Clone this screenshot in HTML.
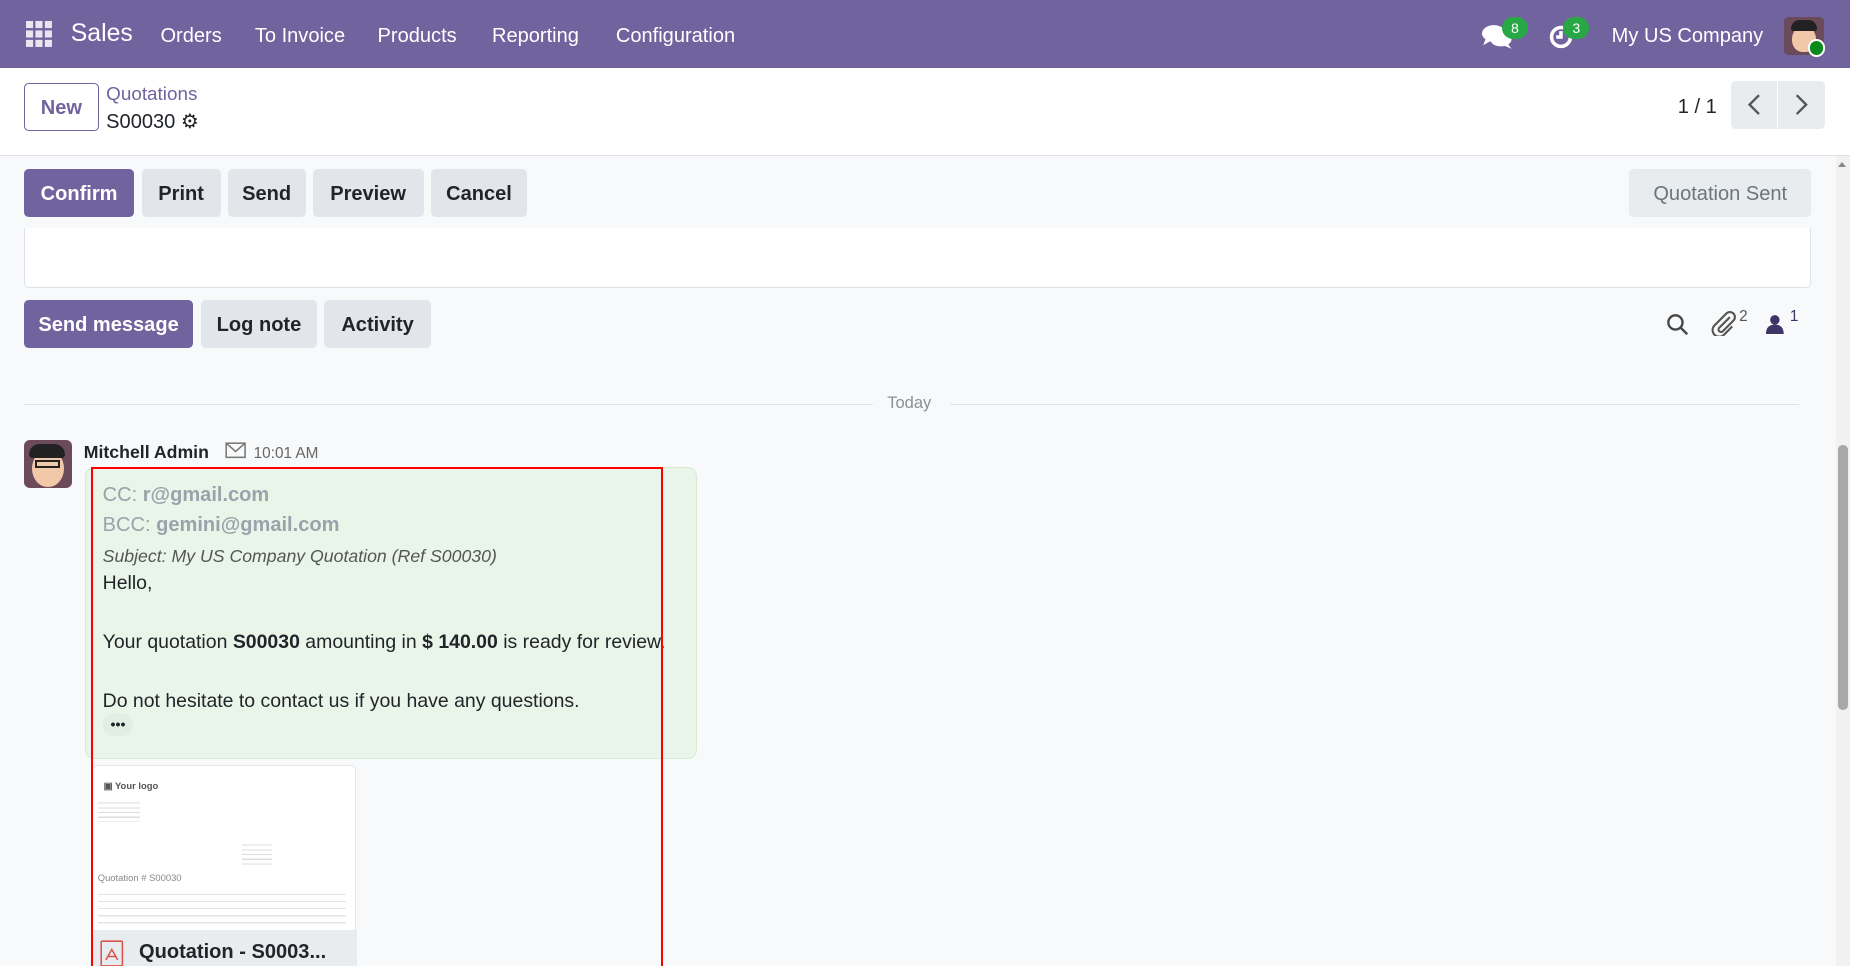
<!DOCTYPE html>
<html><head><meta charset="utf-8"><style>
*{box-sizing:border-box;margin:0;padding:0}
html,body{width:1850px;height:966px;overflow:hidden;background:#f8f9fa}
#w{width:1568px;height:819px;zoom:1.17985;position:relative;font-family:"Liberation Sans",sans-serif;color:#212529;overflow:hidden;background:#f8f9fa}
.a{position:absolute;white-space:nowrap}
.nav{left:0;top:0;width:1568px;height:58px;background:#71639e}
.nav .t{color:#fff;font-size:17px;top:21px}
.btn{position:absolute;height:41px;border-radius:4px;background:#e2e5e9;color:#212529;font-weight:bold;font-size:17px;display:flex;align-items:center;justify-content:center;padding-top:2px}
.pri{background:#71639e;color:#fff}
.badge{position:absolute;width:22px;height:19px;border-radius:10px;background:#28a745;color:#fff;font-size:12px;text-align:center;line-height:19px}
.m{font-size:16.5px}
</style></head><body><div id="w">
<div class="a nav">
 <svg class="a" style="left:22px;top:18px" width="23" height="23" viewBox="0 0 23 23" fill="#e9e6f2"><rect x="0" y="0" width="6" height="6"/><rect x="8" y="0" width="6" height="6"/><rect x="16" y="0" width="6" height="6"/><rect x="0" y="8" width="6" height="6"/><rect x="8" y="8" width="6" height="6"/><rect x="16" y="8" width="6" height="6"/><rect x="0" y="16" width="6" height="6"/><rect x="8" y="16" width="6" height="6"/><rect x="16" y="16" width="6" height="6"/></svg>
 <div class="a t" style="left:60px;top:17px;font-size:21px">Sales</div>
 <div class="a t" style="left:136px">Orders</div>
 <div class="a t" style="left:216px">To Invoice</div>
 <div class="a t" style="left:320px">Products</div>
 <div class="a t" style="left:417px">Reporting</div>
 <div class="a t" style="left:522px">Configuration</div>
 <svg class="a" style="left:1256px;top:20px" width="26" height="22" viewBox="0 0 26 22" fill="#fff"><ellipse cx="10" cy="8" rx="10" ry="7"/><path d="M3 13 L1 18 L8 14Z"/><ellipse cx="16" cy="13" rx="9" ry="6"/><path d="M22 17 L25 21 L18 18Z"/></svg>
 <div class="badge" style="left:1273px;top:14px">8</div>
 <svg class="a" style="left:1312px;top:20px" width="22" height="22" viewBox="0 0 22 22" fill="none" stroke="#fff" stroke-width="3"><circle cx="11" cy="11" r="8"/><path d="M11 6v5h-4"/></svg>
 <div class="badge" style="left:1325px;top:14px">3</div>
 <div class="a t" style="left:1366px">My US Company</div>
 <div class="a" style="left:1512px;top:14px;width:34px;height:33px;border-radius:4px;background:#6b4a5a"><div style="position:absolute;left:7px;top:8px;width:20px;height:22px;border-radius:50% 50% 45% 45%;background:#f2c9a8"></div><div style="position:absolute;left:6px;top:3px;width:22px;height:9px;border-radius:8px 8px 2px 2px;background:#222"></div></div>
 <div class="a" style="left:1532px;top:33px;width:15px;height:15px;border-radius:50%;background:#0a8a1a;border:2px solid #fff"></div>
</div>
<div class="a" style="left:0;top:58px;width:1568px;height:74px;background:#fff;border-bottom:1px solid #dee2e6"></div>
<div class="a" style="left:20px;top:70px;width:64px;height:41px;border:1px solid #71639e;border-radius:4px;color:#71639e;font-size:17px;font-weight:bold;text-align:center;line-height:41px">New</div>
<div class="a" style="left:90px;top:70px;color:#71639e;font-size:16px">Quotations</div>
<div class="a" style="left:90px;top:92px;font-size:17px">S00030 <span style="font-size:17px">⚙</span></div>
<div class="a" style="left:1422px;top:81px;font-size:17px">1 / 1</div>
<div class="a" style="left:1467px;top:69px;width:80px;height:40px;background:#e9ecef;border-radius:4px"></div>
<div class="a" style="left:1506px;top:69px;width:1px;height:40px;background:#fff"></div>
<svg class="a" style="left:1480px;top:80px" width="56" height="18" viewBox="0 0 56 18" fill="none" stroke="#555" stroke-width="2"><path d="M11 1 L3 9 L11 17"/><path d="M43 1 L51 9 L43 17"/></svg>
<div class="btn pri" style="left:20px;top:143px;width:94px">Confirm</div>
<div class="btn" style="left:120px;top:143px;width:67px">Print</div>
<div class="btn" style="left:193px;top:143px;width:66px">Send</div>
<div class="btn" style="left:265px;top:143px;width:94px">Preview</div>
<div class="btn" style="left:365px;top:143px;width:82px">Cancel</div>
<div class="btn" style="left:1381px;top:143px;width:154px;background:#e9ecef;color:#6c757d;font-weight:normal">Quotation Sent</div>
<div class="a" style="left:20px;top:193px;width:1515px;height:51px;background:#fff;border:1px solid #dee2e6;border-top:none;border-radius:0 0 4px 4px"></div>
<div class="btn pri" style="left:20px;top:254px;width:144px">Send message</div>
<div class="btn" style="left:170px;top:254px;width:99px">Log note</div>
<div class="btn" style="left:275px;top:254px;width:90px">Activity</div>
<svg class="a" style="left:1412px;top:265px" width="20" height="20" viewBox="0 0 20 20" fill="none" stroke="#444" stroke-width="2"><circle cx="8" cy="8" r="6"/><path d="M12.5 12.5 L18 18"/></svg>
<svg class="a" style="left:1450px;top:263px" width="22" height="22" viewBox="0 0 22 22" fill="none" stroke="#555" stroke-width="1.8"><path d="M16 6 L7 15 a2 2 0 0 0 3 3 L19 9 a4 4 0 0 0 -6 -6 L3 13 a5.5 5.5 0 0 0 8 8 L18 14"/></svg>
<div class="a" style="left:1474px;top:261px;font-size:13px;color:#555">2</div>
<svg class="a" style="left:1497px;top:266px" width="15" height="17" viewBox="0 0 15 17" fill="#3e3465"><circle cx="7.5" cy="5" r="4"/><path d="M0 17 Q0 9 7.5 9 Q15 9 15 17Z"/></svg>
<div class="a" style="left:1517px;top:261px;font-size:13px;color:#3e3465">1</div>
<div class="a" style="left:20px;top:342px;width:720px;height:1px;background:#dee2e6"></div>
<div class="a" style="left:805px;top:342px;width:720px;height:1px;background:#dee2e6"></div>
<div class="a" style="left:752px;top:334px;font-size:14px;color:#8a8f95">Today</div>
<div class="a" style="left:20px;top:373px;width:41px;height:41px;border-radius:5px;background:#6b4a5a;overflow:hidden"><div style="position:absolute;left:7px;top:8px;width:27px;height:32px;border-radius:50%;background:#f2c9a8"></div><div style="position:absolute;left:5px;top:3px;width:30px;height:12px;border-radius:10px 10px 3px 3px;background:#222"></div><div style="position:absolute;left:10px;top:17px;width:21px;height:7px;border:2px solid #222"></div></div>
<div class="a" style="left:71px;top:375px;font-size:15px;font-weight:bold">Mitchell Admin</div>
<svg class="a" style="left:191px;top:375px" width="18" height="14" viewBox="0 0 18 14" fill="none" stroke="#777" stroke-width="1.3"><rect x="1" y="1" width="16" height="12"/><path d="M1 1 L9 8 L17 1"/></svg>
<div class="a" style="left:215px;top:377px;font-size:13px;color:#666">10:01 AM</div>
<div class="a" style="left:72px;top:396px;width:519px;height:247px;background:#eaf5ea;border:1px solid #d6ead6;border-radius:8px"></div>
<div class="a" style="left:87px;top:410px;font-size:17px;color:#9aa3ab">CC: <b>r@gmail.com</b></div>
<div class="a" style="left:87px;top:436px;font-size:17px;color:#9aa3ab">BCC: <b>gemini@gmail.com</b></div>
<div class="a" style="left:87px;top:463px;font-size:15px;color:#555;font-style:italic">Subject: My US Company Quotation (Ref S00030)</div>
<div class="a m" style="left:87px;top:485px">Hello,</div>
<div class="a m" style="left:87px;top:535px">Your quotation <b>S00030</b> amounting in <b>$ 140.00</b> is ready for review.</div>
<div class="a m" style="left:87px;top:585px">Do not hesitate to contact us if you have any questions.</div>
<div class="a" style="left:87px;top:604px;width:26px;height:20px;border-radius:10px;background:#e3eee3;font-size:12px;text-align:center;line-height:20px;font-weight:bold">•••</div>
<div class="a" style="left:78px;top:648px;width:224px;height:171px;background:#fff;border:1px solid #e5e5e5;border-radius:4px 4px 0 0">
 <div class="a" style="left:9px;top:12px;font-size:8px;font-weight:bold;color:#555">▣ Your logo</div>
 <div class="a" style="left:4px;top:28px;width:36px;height:20px;background:repeating-linear-gradient(#fff 0 3px,#ddd 3px 4px)"></div>
 <div class="a" style="left:126px;top:64px;width:26px;height:20px;background:repeating-linear-gradient(#fff 0 3px,#ddd 3px 4px)"></div>
 <div class="a" style="left:4px;top:90px;font-size:8px;color:#888">Quotation # S00030</div>
 <div class="a" style="left:4px;top:104px;width:210px;height:34px;background:repeating-linear-gradient(#fff 0 5px,#e4e4e4 5px 6px)"></div>
 <div class="a" style="left:0;top:139px;width:224px;height:32px;background:#e9ecef"></div>
 <svg class="a" style="left:6px;top:148px" width="20" height="23" viewBox="0 0 20 23" fill="none" stroke="#d9534f" stroke-width="1.3"><rect x="1" y="1" width="18" height="21" rx="1"/><path d="M5 17 L10 8 L15 17 M7 14 h6"/></svg>
 <div class="a" style="left:39px;top:149px;font-size:17px;font-weight:bold">Quotation - S0003...</div>
</div>
<div class="a" style="left:77px;top:396px;width:485px;height:440px;border:2px solid #f00"></div>
<div class="a" style="left:1556px;top:132px;width:12px;height:687px;background:#f1f1f1"></div>
<div class="a" style="left:1558px;top:377px;width:8px;height:225px;background:#a8a8a8;border-radius:4px"></div>
<div class="a" style="left:1558px;top:137px;width:0;height:0;border-left:4px solid transparent;border-right:4px solid transparent;border-bottom:5px solid #888"></div>
</div></body></html>
